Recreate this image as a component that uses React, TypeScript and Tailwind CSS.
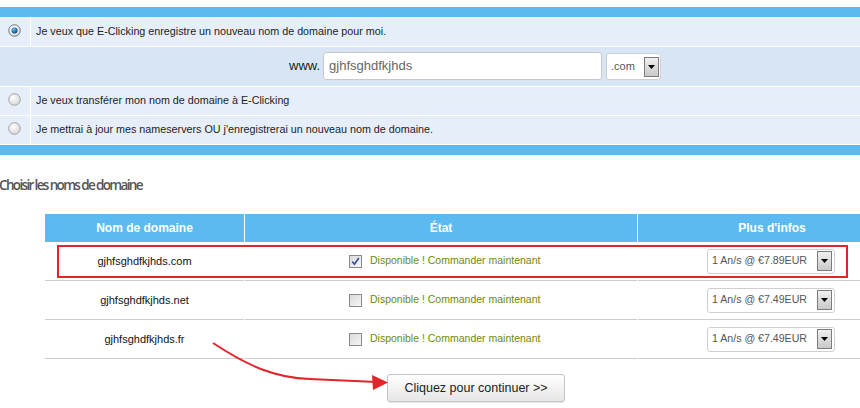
import React from "react";

function Radio({ checked }: { checked?: boolean }) {
  return (
    <svg width="13" height="13" viewBox="0 0 13 13">
      <defs>
        <radialGradient id={checked ? "rg1" : "rg0"} cx="40%" cy="35%" r="70%">
          <stop offset="0%" stopColor="#ffffff" />
          <stop offset="100%" stopColor="#d4d4d4" />
        </radialGradient>
        <radialGradient id="dot" cx="40%" cy="35%" r="70%">
          <stop offset="0%" stopColor="#7fc4f0" />
          <stop offset="60%" stopColor="#1f6fa8" />
          <stop offset="100%" stopColor="#0d3e66" />
        </radialGradient>
      </defs>
      <circle cx="6.5" cy="6.5" r="5.8" fill={`url(#${checked ? "rg1" : "rg0"})`} stroke={checked ? "#6f7b86" : "#a3a3a3"} strokeWidth="1" />
      {checked && <circle cx="6.5" cy="6.5" r="3" fill="url(#dot)" />}
    </svg>
  );
}

function Checkbox({ checked }: { checked?: boolean }) {
  return (
    <svg width="13" height="13" viewBox="0 0 13 13">
      <defs>
        <linearGradient id="cbg" x1="0" y1="0" x2="1" y2="1">
          <stop offset="0%" stopColor="#d9d9d9" />
          <stop offset="100%" stopColor="#f7f7f7" />
        </linearGradient>
      </defs>
      <rect x="0.5" y="0.5" width="12" height="12" fill="url(#cbg)" stroke="#8a8a8a" />
      {checked && (
        <path d="M3.2 6.6 L5.4 9.2 L9.8 3" fill="none" stroke="#2f4f9e" strokeWidth="1.6" />
      )}
    </svg>
  );
}

function SelectArrow() {
  return (
    <div className="flex h-[20px] w-[15px] items-center justify-center border border-[#7c7c7c] bg-gradient-to-b from-[#f0f0f0] to-[#c9c9c9]">
      <svg width="7" height="4" viewBox="0 0 7 4">
        <path d="M0 0 L7 0 L3.5 4 Z" fill="#000" />
      </svg>
    </div>
  );
}

function PriceSelect({ price }: { price: string }) {
  return (
    <div className="flex h-[25px] w-[128px] items-center justify-between rounded-[3px] border border-[#cfcfcf] bg-white pl-[4px] pr-[2px]">
      <span className="text-[10.6px] text-[#555]">1 An/s @ €{price}EUR</span>
      <SelectArrow />
    </div>
  );
}

function DomainRow({ name, price, checked }: { name: string; price: string; checked?: boolean }) {
  return (
    <div className="flex h-[39px] gap-[1px]">
      <div className="flex w-[199px] items-center justify-center border-b border-[#cccccc] text-[11px] text-[#111]">
        {name}
      </div>
      <div className="flex w-[392px] items-center border-b border-[#cccccc] pl-[104px]">
        <Checkbox checked={checked} />
        <span className="ml-[8px] text-[10.5px] text-[#6a8b06]">Disponible ! Commander maintenant</span>
      </div>
      <div className="flex flex-1 items-center border-b border-[#cccccc] pl-[69px]">
        <PriceSelect price={price} />
      </div>
    </div>
  );
}

export default function App() {
  return (
    <div
      className="relative h-[408px] w-[860px] overflow-hidden bg-white"
      style={{ fontFamily: '"Liberation Sans", Arial, sans-serif' }}
    >
      <div className="pt-[7px]">
        <div className="h-[10px] bg-[#5cbaf0]" />
        <div className="flex h-[30px] border-b border-white bg-[#e6eff9]">
          <div className="flex w-[31px] items-center justify-center border-r border-white pb-[3px] pr-[2px]">
            <Radio checked />
          </div>
          <div className="flex items-center pl-[5px] pb-[1px] text-[10.75px] text-[#222]">
            Je veux que E-Clicking enregistre un nouveau nom de domaine pour moi.
          </div>
        </div>
        <div className="flex h-[40px] items-center border-b border-white bg-[#d8e5f4] pl-[289px] pb-[1px]">
          <span className="text-[13px] text-[#222]">www.</span>
          <div className="ml-[3px] flex h-[28px] w-[279px] items-center rounded-[3px] border border-[#c8c8c8] bg-white pl-[5px] text-[13px] text-[#666]">
            gjhfsghdfkjhds
          </div>
          <div className="ml-[4px] mt-[1px] flex h-[27px] w-[55px] items-center justify-between rounded-[3px] border border-[#d0d0d0] bg-white pl-[4px] pr-[1px]">
            <span className="text-[11px] text-[#555]">.com</span>
            <SelectArrow />
          </div>
        </div>
        <div className="flex h-[29px] border-b border-white bg-[#e6eff9]">
          <div className="flex w-[31px] items-center justify-center border-r border-white pb-[3px] pr-[2px]">
            <Radio />
          </div>
          <div className="flex items-center pl-[5px] pb-[1px] text-[10.75px] text-[#222]">
            Je veux transférer mon nom de domaine à E-Clicking
          </div>
        </div>
        <div className="flex h-[29px] border-b border-white bg-[#e6eff9]">
          <div className="flex w-[31px] items-center justify-center border-r border-white pb-[3px] pr-[2px]">
            <Radio />
          </div>
          <div className="flex items-center pl-[5px] pb-[1px] text-[10.75px] text-[#222]">
            Je mettrai à jour mes nameservers OU j'enregistrerai un nouveau nom de domaine.
          </div>
        </div>
        <div className="h-[10px] bg-[#5cbaf0]" />
      </div>

      <div
        className="ml-[-1px] mt-[20px] h-[18px] text-[13.5px] font-semibold tracking-[-1.65px] text-[#555]"
        style={{ fontFamily: '"Open Sans", sans-serif' }}
      >
        Choisir les noms de domaine
      </div>

      <div className="ml-[45px] mt-[21px]">
        <div className="flex h-[28px] gap-[1px] bg-white text-[12px] font-bold text-white">
          <div className="flex w-[199px] items-center justify-center bg-[#5cbaf0]">Nom de domaine</div>
          <div className="flex w-[392px] items-center justify-center bg-[#5cbaf0]">État</div>
          <div className="flex flex-1 items-center justify-center bg-[#5cbaf0] pl-[46px]">Plus d'infos</div>
        </div>
        <DomainRow name="gjhfsghdfkjhds.com" price="7.89" checked />
        <DomainRow name="gjhfsghdfkjhds.net" price="7.49" />
        <DomainRow name="gjhfsghdfkjhds.fr" price="7.49" />
        <div className="flex pl-[342px] pt-[15px]">
          <button className="flex h-[28px] w-[178px] items-center justify-center rounded-[3px] border border-[#c4c4c4] bg-gradient-to-b from-white to-[#e6e6e6] text-[12.5px] text-[#222] shadow-[0_1px_1px_rgba(0,0,0,0.1)]">
            Cliquez pour continuer &gt;&gt;
          </button>
        </div>
      </div>

      <div className="pointer-events-none absolute left-[57px] top-[245px] h-[33px] w-[791px] border-2 border-[#e3242b]" />

      <svg className="pointer-events-none absolute left-0 top-0" width="860" height="408">
        <path
          d="M213 343 C 248 366, 275 378, 310 379 C 335 380, 355 381, 376 382"
          fill="none"
          stroke="#e3242b"
          strokeWidth="2"
        />
        <path d="M372 375 L388 382.5 L373 390 Z" fill="#e3242b" />
      </svg>
    </div>
  );
}
